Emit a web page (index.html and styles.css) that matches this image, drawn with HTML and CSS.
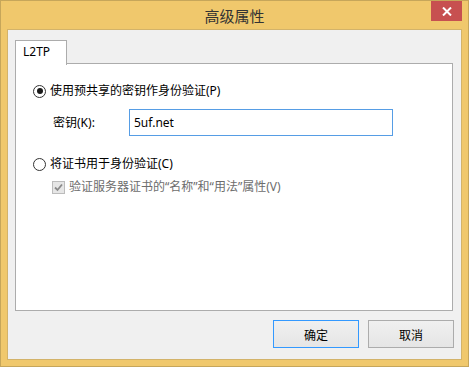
FILE: index.html
```html
<!DOCTYPE html>
<html lang="zh-CN">
<head>
  <meta charset="UTF-8" />
  <meta name="viewport" content="width=device-width, initial-scale=1" />
  <title>高级属性</title>
  <link rel="stylesheet" href="styles.css">
</head>
<body>

  <div class="window">
    <div class="titlebar">
      <span class="title">高级属性</span>
      <button class="close" aria-label="关闭">
        <svg width="10" height="9" viewBox="0 0 10 9">
          <path d="M1 0.5 L9 8.5 M9 0.5 L1 8.5" stroke="#fff" stroke-width="2" fill="none" />
        </svg>
      </button>
    </div>

    <div class="client">
      <div class="tabs">
        <div class="tab active">L2TP</div>
      </div>

      <div class="panel">
        <div class="option">
          <span class="radio checked"></span>
          <span>使用预共享的密钥作身份验证(P)</span>
        </div>

        <div class="key-row">
          <label class="key-label" for="psk">密钥(K):</label>
          <input class="key-input" id="psk" type="text" value="5uf.net" />
        </div>

        <div class="option option-cert">
          <span class="radio"></span>
          <span>将证书用于身份验证(C)</span>
        </div>

        <div class="option option-check disabled">
          <span class="check">
            <svg width="11" height="11" viewBox="0 0 11 11">
              <path d="M2 5.5 L4.5 8 L9 2.5" stroke="#8a8a8a" stroke-width="1.8" fill="none" />
            </svg>
          </span>
          <span>验证服务器证书的“名称”和“用法”属性(V)</span>
        </div>
      </div>

      <div class="actions">
        <button class="btn default">确定</button>
        <button class="btn">取消</button>
      </div>
    </div>
  </div>

</body>
</html>
```

FILE: styles.css
```css
* {
  box-sizing: border-box;
}
body {
  margin: 0;
  font-family: "Noto Sans", "Noto Sans CJK SC", sans-serif;
  font-size: 12px;
  color: #000;
  background: #fff;
}
.window {
  width: 469px;
  height: 367px;
  background: #f0c86c;
  border: 1px solid #c6a65a;
  padding: 0 6px 6px;
  display: flex;
  flex-direction: column;
}
.titlebar {
  height: 28px;
  display: grid;
  grid-template-columns: 1fr auto 1fr;
  align-items: center;
}
.title {
  grid-column: 2;
  font-family: "Noto Sans CJK SC", sans-serif;
  font-size: 15px;
  color: #333;
  line-height: 20px;
  margin-top: 1px;
}
.close {
  grid-column: 3;
  justify-self: end;
  align-self: start;
  width: 31px;
  height: 20px;
  border: none;
  padding: 0;
  background: #c75050;
  display: flex;
  align-items: center;
  justify-content: center;
}
.client {
  flex: 1;
  background: #f0f0f0;
  border: 1px solid #d3b36a;
  padding: 10px 8px 0 7px;
  display: flex;
  flex-direction: column;
}
.tabs {
  display: flex;
  height: 24px;
  position: relative;
  z-index: 1;
  margin-bottom: -1px;
}
.tab {
  width: 52px;
  height: 25px;
  background: #fff;
  border: 1px solid #acacac;
  border-bottom: none;
  padding-left: 7px;
  line-height: 22px;
}
.panel {
  height: 248px;
  background: #fff;
  border: 1px solid #acacac;
  padding: 19px 0 0 17px;
}
.option {
  display: flex;
  align-items: center;
  gap: 4px;
  height: 16px;
  line-height: 16px;
}
.radio {
  width: 13px;
  height: 13px;
  border: 1px solid #333;
  border-radius: 50%;
  background: #fff;
  display: flex;
  align-items: center;
  justify-content: center;
}
.radio.checked::after {
  content: "";
  width: 6px;
  height: 6px;
  border-radius: 50%;
  background: #1a1a1a;
}
.key-row {
  display: flex;
  align-items: center;
  margin: 10px 0 0 20px;
}
.key-label {
  width: 76px;
  margin-top: -2px;
}
.key-input {
  width: 264px;
  height: 27px;
  border: 1px solid #569de5;
  padding: 0 4px;
  font-family: inherit;
  font-size: 12px;
  color: #000;
  outline: none;
}
.option-cert {
  margin-top: 20px;
}
.option-check {
  margin: 7px 0 0 19px;
}
.check {
  width: 13px;
  height: 13px;
  border: 1px solid #bcbcbc;
  background: #e6e6e6;
  display: flex;
  align-items: center;
  justify-content: center;
}
.disabled {
  color: #6d6d6d;
}
.actions {
  display: flex;
  justify-content: flex-end;
  gap: 9px;
  margin-top: 9px;
  margin-right: -1px;
}
.btn {
  width: 86px;
  height: 28px;
  border: 1px solid #acacac;
  background: linear-gradient(#f0f0f0, #e5e5e5);
  font-family: "Noto Sans CJK SC", sans-serif;
  font-size: 12px;
  color: #000;
  padding: 0;
}
.btn.default {
  border-color: #3399ff;
}
```
